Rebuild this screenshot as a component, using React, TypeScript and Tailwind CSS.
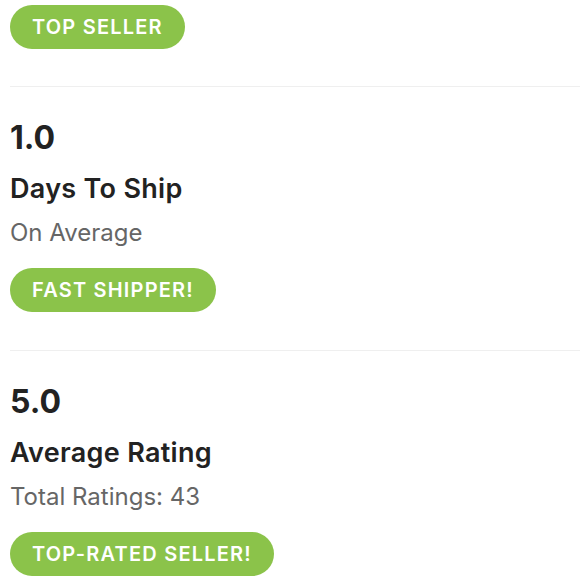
import React from "react";

function Badge({ label }: { label: string }) {
  return (
    <div className="flex">
      <div className="h-[44px] px-[22px] rounded-full bg-[#8bc34a] flex items-center text-white text-[20px] font-semibold tracking-[1.2px] leading-none">
        {label}
      </div>
    </div>
  );
}

function Stat({ value, title, sub, badge }: { value: string; title: string; sub: string; badge: string }) {
  return (
    <div className="pl-[10px]">
      <div className="h-px bg-[#efefef]" />
      <div className="pt-[31px] pr-[10px]">
        <div className="text-[32px] font-bold leading-[40px] text-[#222]">{value}</div>
        <div className="mt-[13px] text-[27px] font-semibold leading-[36px] tracking-[0.3px] text-[#222]">{title}</div>
        <div className="mt-[10px] text-[24px] leading-[32px] text-[#666]">{sub}</div>
        <div className="mt-[19px]">
          <Badge label={badge} />
        </div>
        <div className="h-[38px]" />
      </div>
    </div>
  );
}

export default function App() {
  return (
    <div className="w-[580px] h-[580px] overflow-hidden bg-white" style={{ fontFamily: "Inter, 'Open Sans', sans-serif" }}>
      <div className="pt-[5px] pl-[10px]">
        <Badge label="TOP SELLER" />
      </div>
      <div className="h-[37px]" />
      <Stat value="1.0" title="Days To Ship" sub="On Average" badge="FAST SHIPPER!" />
      <Stat value="5.0" title="Average Rating" sub="Total Ratings: 43" badge="TOP-RATED SELLER!" />
    </div>
  );
}
